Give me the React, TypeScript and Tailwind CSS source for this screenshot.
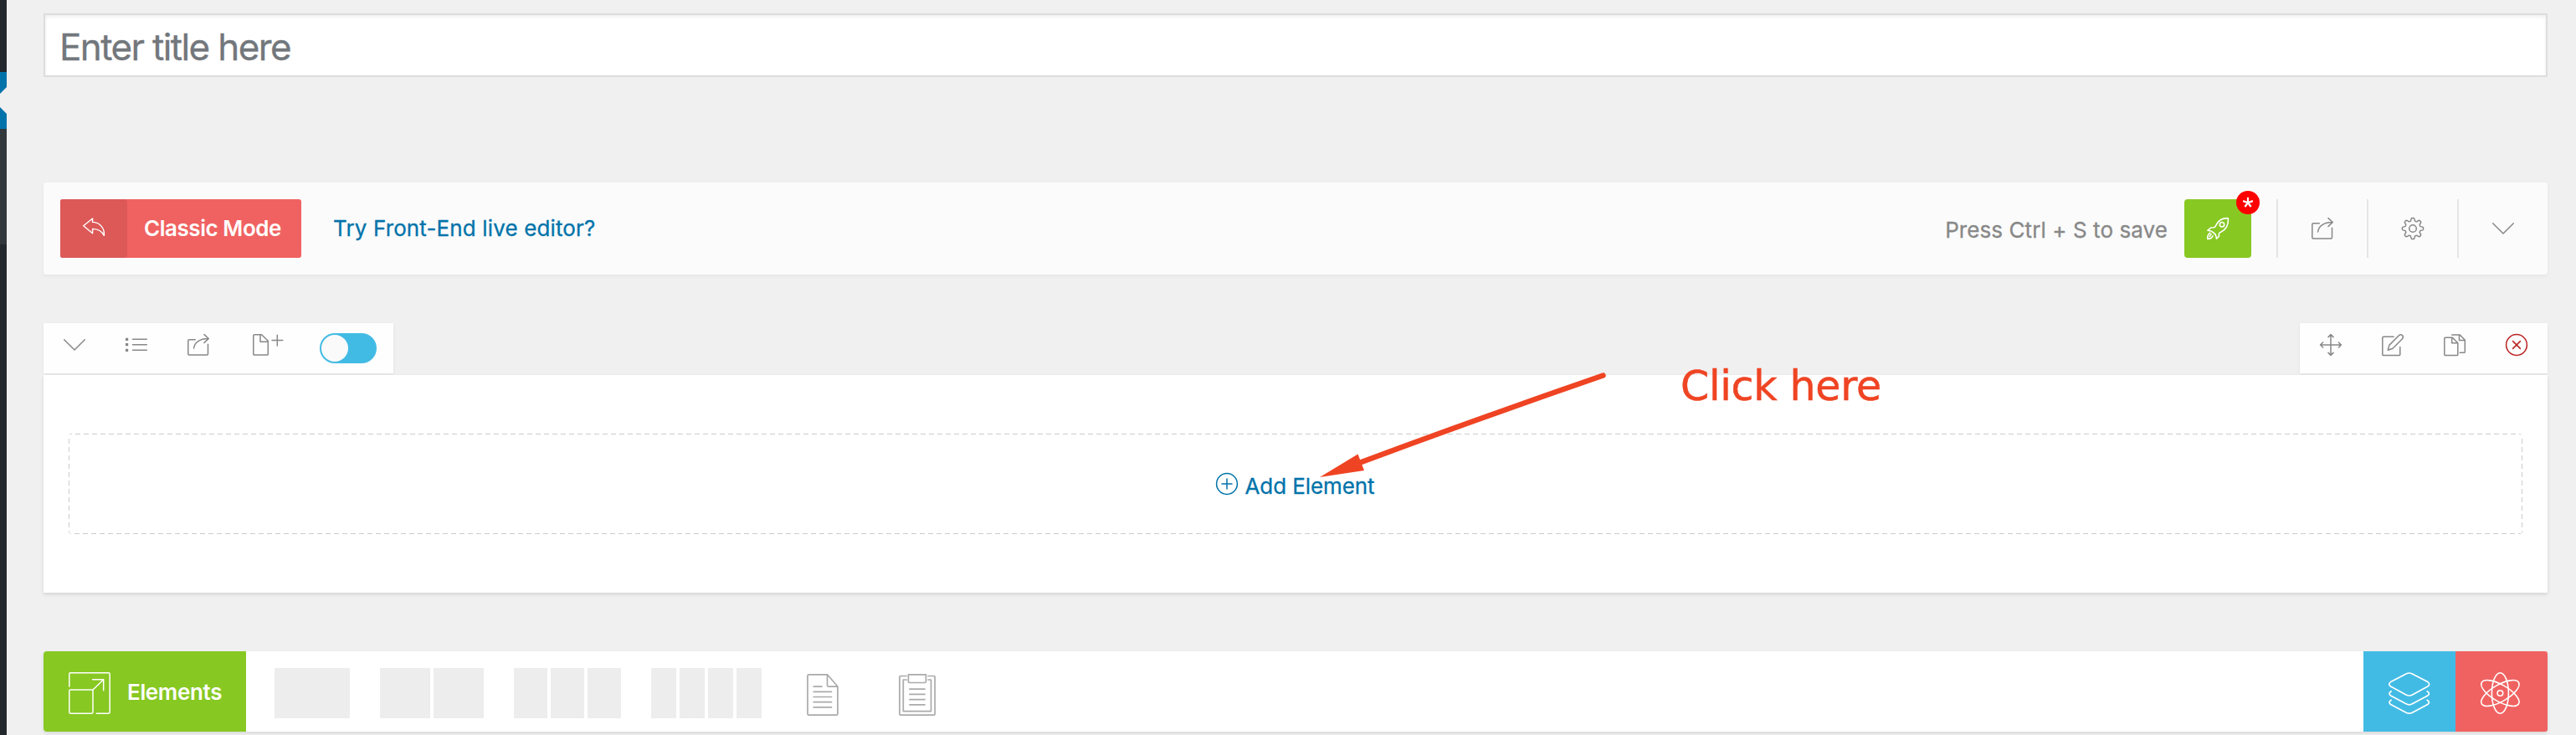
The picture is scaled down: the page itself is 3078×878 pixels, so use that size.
import type { ReactNode } from "react";

type IconProps = { w: number; h: number; sw?: number; className?: string; children: ReactNode };

function Icon({ w, h, sw = 1.5, className = "", children }: IconProps) {
  return (
    <svg
      width={w}
      height={h}
      viewBox={`0 0 ${w} ${h}`}
      fill="none"
      stroke="currentColor"
      strokeWidth={sw}
      strokeLinecap="round"
      strokeLinejoin="round"
      className={`block shrink-0 overflow-visible ${className}`}
    >
      {children}
    </svg>
  );
}

const gearPath =
  Array.from({ length: 161 }, (_, i) => {
    const a = (i / 160) * Math.PI * 2;
    const r = 10.9 + 1.7 * (Math.tanh(1.8 * Math.cos(8 * a)) / Math.tanh(1.8));
    return `${i ? "L" : "M"}${(13 + r * Math.cos(a)).toFixed(2)} ${(13 + r * Math.sin(a)).toFixed(2)}`;
  }).join("") + "Z";

const Chevron = () => (
  <Icon w={26} h={26}><path d="M.7 6.7 13 19 25.3 6.7" /></Icon>
);
const Share = () => (
  <Icon w={26} h={26}>
    <path d="M9.3 6.7H2Q.8 6.7.8 7.9V23.8Q.8 25 2 25H23.3Q24.5 25 24.5 23.8V12.3M7.6 17C8.3 10.5 14 5.5 25.3 5.5M20 .6 25.3 5.5 20 10.4" />
  </Icon>
);
const Gear = () => (
  <Icon w={26} h={26}><path d={gearPath} /><circle cx="13" cy="13" r="4.3" /></Icon>
);
const Rocket = () => (
  <Icon w={26} h={26} sw={1.6}>
    <path d="M25.4.7C18.5.2 13.6 3.4 10.8 9.2Q10 11.6 7.8 11.8L4.8 12 .9 15.2Q5.6 15.4 8.2 18.2 11.4 21 11.4 25.3L14.4 22.2V19.2Q14.6 17.8 17 17C22.5 14.2 26 8.5 25.4.7Z" />
    <circle cx="18" cy="8.2" r="2.7" />
    <path d="M3.8 18.2Q.2 20.8.8 25.4 6 25.4 7 21.8M5 19.6 3.2 22.6" />
  </Icon>
);
const Reply = () => (
  <Icon w={26} h={26} sw={1.4}>
    <path d="M.7 9.8 11.6 1V5.4C20 5.4 26.4 12.6 25.4 21.4 22.6 15.8 18.4 13.6 11.6 13.4V18.8Z" />
  </Icon>
);
const List = () => (
  <Icon w={26} h={26}>
    <path d="M8.5 6.3H25.3M8.5 12.7H25.3M8.5 19.3H25.3" />
    <path strokeWidth="3.2" strokeLinecap="butt" d="M0 6.3H3.2M0 12.7H3.2M0 19.3H3.2" />
  </Icon>
);
const FilePlus = () => (
  <Icon w={36} h={26}>
    <path d="M10.6.7H2Q.8.7.8 1.9V23.9Q.8 25.1 2 25.1H17.1Q18.3 25.1 18.3 23.9V8.3ZM9 .9V9.3H18.1M29.3 1.2V14M23 7.6H35.7" />
  </Icon>
);
const Move = () => (
  <Icon w={26} h={26}>
    <path d="M13 .8V25.2M.8 13H25.2M10 3.6 13 .6 16 3.6M10 22.4 13 25.4 16 22.4M3.6 10 .6 13 3.6 16M22.4 10 25.4 13 22.4 16" />
  </Icon>
);
const Edit = () => (
  <Icon w={26} h={26}>
    <path d="M14 3.3H1.9Q.8 3.3.8 4.4V24.5Q.8 25.6 1.9 25.6H20.7Q21.8 25.6 21.8 24.5V15.6" />
    <path d="M7.3 19.2 8.8 13.4 20.4 1.7Q22.6-.1 24.5 1.6 26.2 3.6 24.5 5.7L13 17.2Z" />
  </Icon>
);
const Copy = () => (
  <Icon w={26} h={26}>
    <path d="M10.4 4.3H1.9Q.8 4.3.8 5.4V24.5Q.8 25.6 1.9 25.6H15.7Q16.8 25.6 16.8 24.5V10.8ZM9.7 4.5V10.8H16.6" />
    <path d="M9.7 1H19.3L25.3 7.3V21.2Q25.3 22.3 24.2 22.3H19.2M18.5 1.2V7.6H25.2" />
  </Icon>
);
const Close = () => (
  <Icon w={26} h={26} className="text-[#b92222]">
    <circle cx="13" cy="13" r="12.4" /><path d="M8.6 8.6 17.4 17.4M17.4 8.6 8.6 17.4" />
  </Icon>
);
const CirclePlus = () => (
  <Icon w={26} h={26}><circle cx="13" cy="13" r="12.4" /><path d="M13 7V19M7 13H19" /></Icon>
);
const Expand = () => (
  <Icon w={50} h={50} sw={1.5}>
    <path d="M.8 17V2.2Q.8.8 2.2.8H47.8Q49.2.8 49.2 2.2V47.8Q49.2 49.2 47.8 49.2H33.2" />
    <path d="M2.2 21H29V47.8Q29 49.2 27.6 49.2H2.2Q.8 49.2.8 47.8V22.4Q.8 21 2.2 21ZM29 21 41.7 8.8M28.6 8.8H41.7V21.8" />
  </Icon>
);
const Doc = () => (
  <Icon w={38} h={50} sw={1.7}>
    <path d="M24.5.8H2.4Q1 .8 1 2.2V47.8Q1 49.2 2.4 49.2H35.5Q36.9 49.2 36.9 47.8V15ZM24.5 1V13.8Q24.5 15.1 25.8 15.1H36.7M8.2 15.1H18M8.2 21.3H29.5M8.2 27.5H29.5M8.2 33.7H29.5M8.2 39.9H29.5" />
  </Icon>
);
const Clipboard = () => (
  <Icon w={44} h={50} sw={1.7}>
    <path d="M9 2.5H2.2Q.9 2.5.9 3.8V47.9Q.9 49.2 2.2 49.2H41.8Q43.1 49.2 43.1 47.9V3.8Q43.1 2.5 41.8 2.5H35M9 7H5.3V44.6H38.5V7H35M12.9 18.2H31M12.9 24.4H31M12.9 30.6H31M12.9 36.8H31M11.4.8H32.4V9.2Q32.4 10.5 31.1 10.5H12.7Q11.4 10.5 11.4 9.2Z" />
  </Icon>
);
const Layers = () => (
  <Icon w={50} h={50} sw={1.7}>
    <path d="M21 1.9Q24.7.1 28.4 1.9L46.8 11.6Q50.6 14.3 46.8 17L28.4 27Q24.7 29 21 27L2.6 17Q-1.2 14.3 2.6 11.6Z" />
    <path d="M3.2 22.8Q-.9 25.5 2.6 28L21 37.8Q24.7 39.8 28.4 37.8L46.8 28Q50.3 25.5 46.2 22.8" />
    <path d="M3.2 33.3Q-.9 36 2.6 38.5L21 48.2Q24.7 50.2 28.4 48.2L46.8 38.5Q50.3 36 46.2 33.3" />
  </Icon>
);
const Atom = () => (
  <Icon w={47} h={50} sw={1.6}>
    <ellipse cx="23.4" cy="25" rx="10" ry="24.2" />
    <ellipse cx="23.4" cy="25" rx="10" ry="25.5" transform="rotate(60 23.4 25)" />
    <ellipse cx="23.4" cy="25" rx="10" ry="25.5" transform="rotate(-60 23.4 25)" />
    <circle cx="23.4" cy="25" r="3.3" />
  </Icon>
);

function Columns({ count, width }: { count: number; width: string }) {
  return (
    <div className="flex gap-1">
      {Array.from({ length: count }, (_, i) => (
        <div key={i} className={`h-[60px] bg-[#ededed] ${width}`} />
      ))}
    </div>
  );
}

export default function App() {
  return (
    <div className="relative flex h-[878px] w-[3078px] overflow-hidden bg-[#f0f0f0] font-['Inter',sans-serif]">
      <aside className="flex w-2 shrink-0 flex-col bg-[#23282d]">
        <div className="h-[86px]" />
        <div className="h-[68px] bg-[#0073aa]">
          <svg width="8" height="68" className="block"><path d="M8 18 0 26V42L8 50Z" fill="#f0f0f0" /></svg>
        </div>
        <div className="h-[138px] bg-[#32373c]" />
      </aside>

      <main className="flex flex-1 flex-col pl-11 pr-[34px] pt-4">
        <div className="flex h-[76px] items-center border-2 border-[#dddddd] bg-white pl-[17px] pt-1 text-[44px] leading-none tracking-[-1.65px] text-[#72777c] shadow-[inset_0_2px_4px_rgba(0,0,0,0.07)] [-webkit-text-stroke:0.3px_currentColor]">
          <span className="whitespace-nowrap">Enter title here</span>
        </div>

        <div className="mt-[126px] flex h-[110px] items-center rounded-[3px] bg-[#fbfbfb] px-5 text-[26px] leading-none shadow-[0_2px_4px_rgba(0,0,0,0.05)]">
          <button className="flex h-[70px] w-[288px] items-center overflow-hidden rounded-[3px] bg-[#f06261] font-semibold text-white">
            <span className="flex h-full w-20 items-center justify-center rounded-r-[4px] bg-[#dc5958]"><Reply /></span>
            <span className="ml-5 whitespace-nowrap tracking-[-0.45px]">Classic Mode</span>
          </button>
          <a className="ml-[38px] whitespace-nowrap tracking-[0.13px] text-[#0073aa] [-webkit-text-stroke:0.3px_currentColor]">Try Front-End live editor?</a>
          <span className="ml-auto mt-1 whitespace-nowrap tracking-[0.08px] text-[#888888] [-webkit-text-stroke:0.3px_currentColor]">Press Ctrl + S to save</span>
          <button className="relative ml-5 flex h-[70px] w-20 items-center justify-center rounded-[4px] bg-[#87c823] text-white">
            <Rocket />
            <span className="absolute -right-2.5 -top-2.5 flex size-7 items-center justify-center rounded-full bg-[#ff0000]">
              <svg width="14" height="14" viewBox="0 0 14 14" stroke="#fff" strokeWidth="2.2"><path d="M7 7V.8M7 7 1.1 5.1M7 7 12.9 5.1M7 7 3.4 12M7 7 10.6 12" /></svg>
            </span>
          </button>
          <div className="ml-[30px] flex h-[70px] text-[#888888]">
            {[<Share />, <Gear />, <Chevron />].map((icon, i) => (
              <div key={i} className="flex w-[108px] items-center justify-center border-l-2 border-[#e5e5e5] last:-mr-5">{icon}</div>
            ))}
          </div>
        </div>

        <div className="mt-[58px] flex h-[60px] justify-between text-[#888888]">
          <div className="flex w-[418px] items-start bg-[#fefefe] pl-6 pt-[13px] shadow-[0_1px_3px_rgba(0,0,0,0.08)]">
            <Chevron />
            <span className="ml-12"><List /></span>
            <span className="ml-12"><Share /></span>
            <span className="ml-[52px]"><FilePlus /></span>
            <span className="-mt-px ml-11 flex h-9 w-[68px] rounded-full bg-[#42bbe4] p-0.5">
              <span className="size-8 rounded-full bg-[#fafafa]" />
            </span>
          </div>
          <div className="flex w-[296px] items-start gap-12 bg-[#fefefe] pl-6 pt-[13px] shadow-[0_1px_3px_rgba(0,0,0,0.08)]">
            <Move />
            <Edit />
            <Copy />
            <Close />
          </div>
        </div>

        <section className="mt-0.5 h-[260px] bg-white px-[30px] pt-[70px] shadow-[0_2px_4px_rgba(0,0,0,0.12)]">
          <div className="flex h-[120px] items-center justify-center rounded-[4px] bg-[linear-gradient(90deg,#ccc_60%,transparent_60%),linear-gradient(90deg,#ccc_60%,transparent_60%),linear-gradient(180deg,#ccc_60%,transparent_60%),linear-gradient(180deg,#ccc_60%,transparent_60%)] bg-[length:10px_1px,10px_1px,1px_10px,1px_10px] bg-[position:8px_0,7px_100%,0_6px,100%_6px] [background-repeat:repeat-x,repeat-x,repeat-y,repeat-y] text-[26px] leading-none text-[#0073aa]">
            <CirclePlus />
            <span className="ml-2 mt-1.5 whitespace-nowrap tracking-[-0.08px] [-webkit-text-stroke:0.3px_currentColor]">Add Element</span>
          </div>
        </section>

        <div className="mt-[70px] flex h-24 items-center rounded-[4px] bg-white shadow-[0_2px_4px_rgba(0,0,0,0.1)]">
          <button className="flex h-full w-[242px] items-center rounded-l-[4px] bg-[#87c823] pl-[30px] text-[26px] font-semibold leading-none text-white">
            <span className="mt-1"><Expand /></span>
            <span className="ml-5 mt-0.5 whitespace-nowrap tracking-[-0.35px]">Elements</span>
          </button>
          <div className="ml-[34px] mt-1 flex gap-9">
            <Columns count={1} width="w-[90px]" />
            <Columns count={2} width="w-[60px]" />
            <Columns count={3} width="w-10" />
            <Columns count={4} width="w-[30px]" />
          </div>
          <div className="ml-[54px] mt-2 flex gap-[72px] text-[#aaaaaa]"><Doc /><Clipboard /></div>
          <div className="ml-auto flex h-full text-white">
            <div className="flex w-[110px] items-center justify-center bg-[#42bbe4] pt-1"><Layers /></div>
            <div className="flex w-[110px] items-center justify-center rounded-r-[3px] bg-[#f06261] pr-1 pt-1"><Atom /></div>
          </div>
        </div>
      </main>

      <svg width="350" height="130" className="absolute left-[1572px] top-[444px]">
        <path d="M343.5 4.5 Q190 57.5 52 109" fill="none" stroke="#ef4423" strokeWidth="6.4" strokeLinecap="round" />
        <path d="M5 126 50.5 98.5 58 118Z" fill="#ef4423" />
      </svg>
      <span className="absolute left-[2008px] top-[437px] whitespace-nowrap font-['DejaVu_Sans',sans-serif] text-[49px] leading-none tracking-[-0.3px] text-[#ef4423] [-webkit-text-stroke:0.5px_#ef4423]">Click here</span>
    </div>
  );
}
